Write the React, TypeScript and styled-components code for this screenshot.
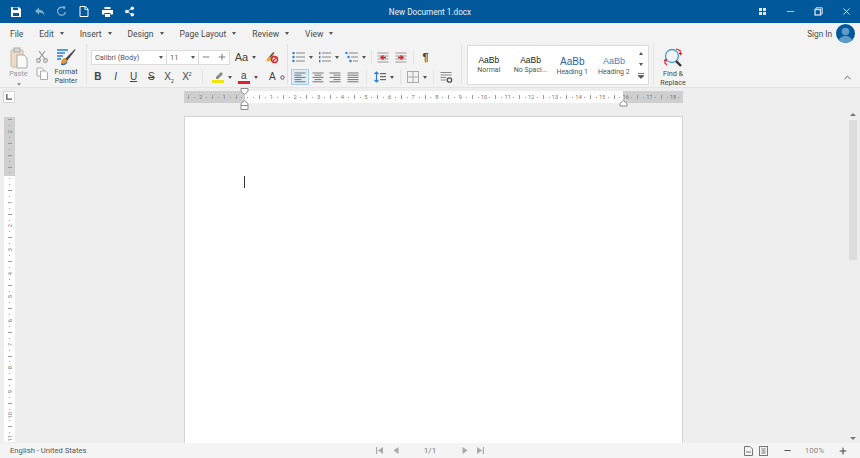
import * as React from 'react'
import styled, { createGlobalStyle } from 'styled-components'
import { Minus, Plus, X, ChevronUp, Share2 } from 'lucide-react'

const GlobalStyle = createGlobalStyle`
  html, body { margin: 0; padding: 0; }
  body { font-family: Roboto, "Noto Sans", sans-serif; color: #4a4a4a; }
`

const Shell = styled.div`
  width: 860px;
  height: 458px;
  display: flex;
  flex-direction: column;
  overflow: hidden;
  background: #eeeeee;
`

const TitleBar = styled.div`
  height: 23px;
  flex: none;
  background: #01589b;
  display: grid;
  grid-template-columns: 1fr auto 1fr;
  align-items: center;
  color: #fff;
`

const TitleGroup = styled.div<{ $end?: boolean }>`
  display: flex;
  align-items: center;
  justify-content: ${p => (p.$end ? 'flex-end' : 'flex-start')};
  padding-left: ${p => (p.$end ? 0 : 5)}px;
`

const TitleButton = styled.div<{ $w?: number; $dim?: boolean }>`
  width: ${p => p.$w ?? 22.7}px;
  height: 23px;
  display: flex;
  align-items: center;
  justify-content: center;
  opacity: ${p => (p.$dim ? 0.5 : 1)};
`

const DocTitle = styled.div`
  font-size: 8.2px;
  color: #eaf2f8;
`

const MenuBar = styled.div`
  height: 21px;
  flex: none;
  background: #f3f3f3;
  display: flex;
  align-items: center;
  padding: 0 5px 0 10px;
  font-size: 8.5px;
  color: #4a4a4a;
`

const MenuItem = styled.div`
  display: flex;
  align-items: center;
  gap: 6px;
  margin-right: 16px;
`

const Caret = styled.span<{ $flip?: boolean; $dim?: boolean; $top?: number }>`
  display: inline-block;
  width: 0;
  height: 0;
  border-left: 2.5px solid transparent;
  border-right: 2.5px solid transparent;
  border-top: 3px solid ${p => (p.$dim ? '#999' : '#555')};
  margin-top: ${p => p.$top ?? 0}px;
  transform: ${p => (p.$flip ? 'rotate(180deg)' : 'none')};
  flex: none;
`

const SignIn = styled.div`
  margin-left: auto;
  display: flex;
  align-items: center;
  gap: 4px;
  font-size: 8.2px;
`

const Avatar = styled.div`
  width: 19px;
  height: 19px;
  border-radius: 50%;
  background: #01589b;
  overflow: hidden;
  display: flex;
  justify-content: center;
`

const Ribbon = styled.div`
  height: 44px;
  flex: none;
  background: #f3f3f3;
  border-bottom: 1px solid #e4e4e4;
  display: flex;
  position: relative;
  box-sizing: border-box;
`

const Group = styled.div<{ $w: number; $pad?: number }>`
  width: ${p => p.$w}px;
  flex: none;
  display: flex;
  box-sizing: border-box;
  padding-left: ${p => p.$pad ?? 0}px;
  border-right: 1px solid #e2e2e2;
  margin-bottom: 3px;
`

const TallTool = styled.div<{ $w: number; $dim?: boolean }>`
  width: ${p => p.$w}px;
  flex: none;
  display: flex;
  flex-direction: column;
  align-items: center;
  padding-top: 3px;
  font-size: 7.2px;
  line-height: 8.5px;
  text-align: center;
  color: ${p => (p.$dim ? '#9a9a9a' : '#4a4a4a')};
`

const TallIcon = styled.div`
  height: 22px;
  margin-bottom: 1px;
  display: flex;
  align-items: center;
`

const SmallStack = styled.div`
  width: 18px;
  flex: none;
  display: flex;
  flex-direction: column;
  align-items: center;
  justify-content: space-between;
  padding: 6px 0 4px;
  box-sizing: border-box;
`

const Rows = styled.div<{ $left: number }>`
  display: flex;
  flex-direction: column;
  padding: 5px 0 0 ${p => p.$left}px;
  gap: 4px;
`

const Row = styled.div<{ $shift?: number }>`
  display: flex;
  align-items: center;
  height: 16px;
  margin-left: ${p => p.$shift ?? 0}px;
`

const Tool = styled.div<{ $w?: number; $active?: boolean; $ml?: number }>`
  width: ${p => p.$w ?? 17.8}px;
  height: 16px;
  margin-left: ${p => p.$ml ?? 0}px;
  box-sizing: border-box;
  flex: none;
  display: flex;
  align-items: center;
  justify-content: center;
  gap: 4px;
  font-family: "Liberation Sans", sans-serif;
  color: #444;
  background: ${p => (p.$active ? '#dcebf6' : 'transparent')};
  border: 1px solid ${p => (p.$active ? '#a9cfe9' : 'transparent')};
`

const Sep = styled.div<{ $m?: number }>`
  width: 1px;
  height: 14px;
  background: #e2e2e2;
  flex: none;
  margin: 0 ${p => p.$m ?? 4}px;
`

const FontBox = styled.div`
  width: 139px;
  height: 15px;
  flex: none;
  box-sizing: border-box;
  background: #fff;
  border: 1px solid #dcdcdc;
  display: flex;
  font-size: 7.4px;
  color: #555;
`

const FontField = styled.div<{ $w: number }>`
  width: ${p => p.$w}px;
  flex: none;
  box-sizing: border-box;
  display: flex;
  align-items: center;
  justify-content: space-between;
  padding: 0 3px;
  border-right: 1px solid #dcdcdc;
  &:last-child { border-right: 0; padding: 0 2px; }
`

const Letter = styled.span<{ $weight?: number; $italic?: boolean; $deco?: string; $size?: number }>`
  font-size: ${p => p.$size ?? 10}px;
  font-weight: ${p => p.$weight ?? 400};
  font-style: ${p => (p.$italic ? 'italic' : 'normal')};
  text-decoration: ${p => p.$deco ?? 'none'};
  line-height: 1;
  color: #444;
  sub, sup { font-size: 5px; line-height: 0; }
`

const Swatch = styled.div`
  display: flex;
  flex-direction: column;
  align-items: center;
  line-height: 1;
`

const SwatchBar = styled.div<{ $color: string }>`
  width: 12px;
  height: 3px;
  background: ${p => p.$color};
`

const Gallery = styled.div`
  width: 182px;
  height: 40px;
  margin: 1px 0 0 5px;
  flex: none;
  box-sizing: border-box;
  background: #fff;
  border: 1px solid #dcdcdc;
  display: flex;
`

const StyleCard = styled.div`
  width: 41.7px;
  flex: none;
  display: flex;
  flex-direction: column;
  align-items: center;
  padding-top: 9px;
  box-sizing: border-box;
  font-size: 7px;
  color: #555;
  line-height: 9px;
  white-space: nowrap;
`

const StylePreview = styled.div<{ $blue?: string; $size?: number }>`
  font-family: "Liberation Sans", "Noto Sans", sans-serif;
  font-size: ${p => p.$size ?? 8.5}px;
  color: ${p => p.$blue ?? '#222'};
  line-height: ${p => (p.$size ? 13 : 11)}px;
`

const GalleryArrows = styled.div`
  margin-left: auto;
  width: 14px;
  display: flex;
  flex-direction: column;
  align-items: center;
  justify-content: space-between;
  padding: 6px 0 5px;
`

const CollapseButton = styled.div`
  position: absolute;
  right: 7px;
  bottom: 4px;
  color: #555;
  display: flex;
`

const Workspace = styled.div`
  flex: 1;
  min-height: 0;
  display: grid;
  grid-template-columns: 184px 499px 1fr;
  grid-template-rows: 28px 1fr;
  background: #eeeeee;
`

const Corner = styled.div`
  width: 12px;
  height: 12px;
  margin: 3px 0 0 3px;
  background: #d6d6d6;
  padding: 1px;
  box-sizing: border-box;
`

const CornerInner = styled.div`
  width: 10px;
  height: 10px;
  background: #fff;
  display: flex;
  align-items: center;
  justify-content: center;
`

const HRuler = styled.div`
  position: relative;
  height: 12px;
  margin-top: 3px;
  display: flex;
  padding-left: 1.8px;
  background: #cfcfcf;
`

const HCell = styled.div<{ $white: boolean }>`
  width: 5.92px;
  height: 12px;
  flex: none;
  background: ${p => (p.$white ? '#fff' : '#cfcfcf')};
  display: flex;
  align-items: center;
  justify-content: center;
  font-size: 5.8px;
  color: #777;
  white-space: nowrap;
`

const HTick = styled.div<{ $long?: boolean }>`
  width: 1px;
  height: ${p => (p.$long ? 4 : 1)}px;
  background: #999;
  flex: none;
`

const VTick = styled.div<{ $long?: boolean }>`
  height: 1px;
  width: ${p => (p.$long ? 4 : 1)}px;
  background: #999;
  flex: none;
`

const Marker = styled.svg<{ $x: number; $y: number }>`
  position: absolute;
  left: ${p => p.$x}px;
  top: ${p => p.$y}px;
`

const VCol = styled.div`
  padding: 0.8px 0 0 4px;
  overflow: hidden;
`

const VRuler = styled.div`
  width: 11px;
  display: flex;
  flex-direction: column;
`

const VCell = styled.div<{ $white: boolean }>`
  height: 5.92px;
  flex: none;
  background: ${p => (p.$white ? '#fff' : '#cfcfcf')};
  display: flex;
  align-items: center;
  justify-content: center;
  font-size: 5.8px;
  color: #777;
  white-space: nowrap;
`

const VNumber = styled.span`
  writing-mode: vertical-rl;
  transform: rotate(180deg);
`

const Page = styled.div`
  background: #fff;
  border: 1px solid #d4d4d4;
  border-bottom: 0;
  box-sizing: border-box;
  padding: 59px 0 0 59px;
`

const TextCursor = styled.div`
  width: 1px;
  height: 12px;
  background: #333;
`

const ScrollCol = styled.div`
  display: flex;
  justify-content: flex-end;
  padding-right: 3px;
`

const ScrollBar = styled.div`
  width: 8px;
  display: flex;
  flex-direction: column;
  align-items: center;
  margin-top: -3px;
`

const ScrollUp = styled.div`
  width: 0;
  height: 0;
  border-left: 3.5px solid transparent;
  border-right: 3.5px solid transparent;
  border-bottom: 3px solid #777;
  margin: 0 0 4px;
`

const ScrollDown = styled(ScrollUp)`
  border-bottom: 0;
  border-top: 3px solid #777;
  margin: auto 0 3px;
`

const ScrollThumb = styled.div`
  width: 8px;
  height: 140px;
  background: #dcdcdc;
`

const StatusBar = styled.div`
  height: 15px;
  flex: none;
  background: #f4f4f4;
  display: grid;
  grid-template-columns: 1fr auto 1fr;
  align-items: center;
  font-size: 8px;
  color: #555;
`

const Language = styled.div`
  padding-left: 10px;
  font-size: 7.7px;
`

const Pager = styled.div`
  display: flex;
  align-items: center;
  color: #aaa;
`

const PagerButton = styled.div`
  width: 16px;
  display: flex;
  justify-content: center;
`

const PageCount = styled.div`
  width: 53px;
  text-align: center;
  color: #777;
`

const ZoomBar = styled.div`
  display: flex;
  align-items: center;
  justify-content: flex-end;
  padding-right: 12.5px;
`

const ZoomValue = styled.div`
  width: 46px;
  text-align: center;
  color: #888;
`

const ZoomBtn = styled.div<{ $gap?: number }>`
  display: flex;
  margin-right: ${p => p.$gap ?? 0}px;
  color: #444;
`

const Blue = '#2b7cd3'

function Lines ({ kind }: { kind: 'left' | 'center' | 'right' | 'justify' }) {
  const rows = [0, 1, 2, 3, 4]
  return (
    <svg width='12' height='11' viewBox='0 0 12 11'>
      {rows.map(r => {
        const short = r % 2 === 1 && kind !== 'justify'
        const w = short ? 7 : 11
        const x = kind === 'left' || kind === 'justify' ? 0.5 : kind === 'right' ? 11.5 - w : 6 - w / 2
        return <rect key={r} x={x} y={0.5 + r * 2.2} width={w} height='1' fill='#777' />
      })}
    </svg>
  )
}

function ListIcon ({ kind }: { kind: 'bullet' | 'number' | 'multi' }) {
  return (
    <svg width='13' height='11' viewBox='0 0 13 11'>
      {[1, 5, 9].map((y, i) => {
        const ox = kind === 'multi' ? i * 2 : 0
        return (
          <g key={y}>
            {kind === 'number'
              ? <rect x={1} y={y - 1} width='1.4' height='2.4' fill={Blue} />
              : <circle cx={1.5 + ox} cy={y} r='1.2' fill={Blue} />}
            <rect x={4 + ox} y={y - 0.5} width={9 - ox} height='1' fill='#888' />
          </g>
        )
      })}
    </svg>
  )
}

function IndentIcon ({ flip }: { flip?: boolean }) {
  return (
    <svg width='12' height='11' viewBox='0 0 12 11'>
      {[0.5, 3.5, 6.5, 9.5].map(y => <rect key={y} x='0.5' y={y} width='11' height='1' fill='#999' />)}
      <path d={flip ? 'M3 5.5h4M5.5 3.5l2.5 2-2.5 2' : 'M9 5.5H5M6.5 3.5L4 5.5l2.5 2'} stroke='#e0202f' strokeWidth='1.4' fill='none' />
    </svg>
  )
}

function ClearFormat () {
  return (
    <svg width='14' height='13' viewBox='0 0 14 13'>
      <path d='M8 1L3 6.5 1 10h4l4-4' fill='#e9a33a' />
      <path d='M9 1.5L5 6' stroke='#555' strokeWidth='1.2' />
      <circle cx='9.5' cy='8.5' r='3' fill='none' stroke='#d9252e' strokeWidth='1.4' />
      <path d='M7.5 10.5l4-4' stroke='#d9252e' strokeWidth='1.2' />
    </svg>
  )
}

function ParaStyleIcon () {
  return (
    <svg width='13' height='12' viewBox='0 0 13 12'>
      {[1, 3.5, 6, 8.5].map(y => <rect key={y} x='0.5' y={y} width={y > 5 ? 6 : 11} height='1' fill='#888' />)}
      <circle cx='9.5' cy='9' r='2.2' fill='none' stroke='#555' strokeWidth='1.3' />
    </svg>
  )
}

function Ruler () {
  const cells = []
  for (let i = -10; i < 74; i++) {
    const abs = Math.abs(i)
    let content: React.ReactNode = <HTick />
    if (i !== 0 && abs % 4 === 0) content = abs / 4
    else if (abs % 4 === 2) content = <HTick $long />
    cells.push(<HCell key={i} $white={i >= 0 && i < 64}>{content}</HCell>)
  }
  return (
    <HRuler>
      {cells}
      <Marker $x={56} $y={-3} width='9' height='7' viewBox='0 0 9 7'>
        <path d='M1 .5h7v3L4.500 6.500 1 3.500z' fill='#fff' stroke='#8a8a8a' />
      </Marker>
      <Marker $x={56} $y={9} width='9' height='10' viewBox='0 0 9 10'>
        <path d='M1 9.500v-6L4.500 .5 8 3.500v6zM1 5.500h7' fill='#fff' stroke='#8a8a8a' />
      </Marker>
      <Marker $x={435} $y={9} width='9' height='7' viewBox='0 0 9 7'>
        <path d='M1 6v-2.500L4.500 .5 8 3.500V6z' fill='#fff' stroke='#8a8a8a' />
      </Marker>
    </HRuler>
  )
}

function SideRuler () {
  const cells = []
  for (let i = -10; i < 45; i++) {
    const abs = Math.abs(i)
    let content: React.ReactNode = <VTick />
    if (i !== 0 && abs % 4 === 0) content = <VNumber>{abs / 4}</VNumber>
    else if (abs % 4 === 2) content = <VTick $long />
    cells.push(<VCell key={i} $white={i >= 0}>{content}</VCell>)
  }
  return <VRuler>{cells}</VRuler>
}

export default function App () {
  return (
    <Shell>
      <GlobalStyle />
      <TitleBar>
        <TitleGroup>
          <TitleButton>
            <svg width='10' height='10' viewBox='0 0 10 10'><path d='M0 0h8l2 2v8H0z' fill='#fff' /><rect x='2' y='0.500' width='5' height='2.500' fill='#01589b' /><rect x='2' y='6' width='6' height='3' fill='#01589b' /></svg>
          </TitleButton>
          <TitleButton $dim>
            <svg width='11' height='10' viewBox='0 0 11 10'><path d='M1 4l4-3.500v2.200c3.500 0 5.500 2.300 5.500 6.300C9.500 6.500 8 5.500 5 5.500v2.200z' fill='#fff' /></svg>
          </TitleButton>
          <TitleButton $dim>
            <svg width='11' height='11' viewBox='0 0 11 11'><path d='M8.500 2.500A4 4 0 1 0 9.500 6' stroke='#fff' strokeWidth='1.300' fill='none' /><path d='M6.500 0l3 .5L9 3.500z' fill='#fff' /></svg>
          </TitleButton>
          <TitleButton>
            <svg width='10' height='11' viewBox='0 0 10 11'><path d='M1 .5h5.500L9 3v7.500H1zM6 .5V3.500h3' stroke='#fff' fill='none' /></svg>
          </TitleButton>
          <TitleButton>
            <svg width='11' height='10' viewBox='0 0 11 10'><rect x='2.500' y='0' width='6' height='2' fill='#fff' /><path d='M0 3h11v4.500H8.500V6h-6v1.500H0z' fill='#fff' /><rect x='3' y='7' width='5' height='3' fill='#fff' /></svg>
          </TitleButton>
          <TitleButton>
            <Share2 size={11} color='#fff' fill='#fff' strokeWidth={1.6} />
          </TitleButton>
        </TitleGroup>
        <DocTitle>New Document 1.docx</DocTitle>
        <TitleGroup $end>
          <TitleButton $w={27}>
            <svg width='7' height='7' viewBox='0 0 7 7' fill='#dfe9f1'><rect width='3' height='3' /><rect x='4' width='3' height='3' /><rect y='4' width='3' height='3' /><rect x='4' y='4' width='3' height='3' /></svg>
          </TitleButton>
          <TitleButton $w={28}>
            <Minus size={11} color='#c4d7e6' />
          </TitleButton>
          <TitleButton $w={28}>
            <svg width='9' height='9' viewBox='0 0 9 9'><path d='M2 2V.8h6.200V7H7' stroke='#d5e3ee' fill='none' /><rect x='1' y='2.500' width='5.500' height='5.500' stroke='#d5e3ee' strokeWidth='1.300' fill='none' /></svg>
          </TitleButton>
          <TitleButton $w={28}>
            <X size={11} color='#e3edf5' />
          </TitleButton>
        </TitleGroup>
      </TitleBar>

      <MenuBar>
        <MenuItem>File</MenuItem>
        {['Edit', 'Insert', 'Design', 'Page Layout', 'Review', 'View'].map(label => (
          <MenuItem key={label}>{label}<Caret /></MenuItem>
        ))}
        <SignIn>
          Sign In
          <Avatar>
            <svg width='19' height='19' viewBox='0 0 19 19'><circle cx='9.500' cy='7.500' r='3.800' fill='#5f9bc9' /><path d='M2.500 19c0-5 3-7 7-7s7 2 7 7z' fill='#5f9bc9' /></svg>
          </Avatar>
        </SignIn>
      </MenuBar>

      <Ribbon>
        <Group $w={87} $pad={4}>
          <TallTool $w={29} $dim>
            <TallIcon>
              <svg width='18' height='22' viewBox='0 0 18 22'><rect x='1' y='3' width='12' height='17' rx='1' fill='#ecdcc8' stroke='#c9b79f' /><rect x='4' y='1' width='6' height='4' fill='#d8d8d8' stroke='#aaa' /><path d='M7 8h7l3 3v10H7z' fill='#fafafa' stroke='#aaa' /></svg>
            </TallIcon>
            Paste
            <Caret $dim $top={4} />
          </TallTool>
          <SmallStack>
            <svg width='12' height='13' viewBox='0 0 12 13' fill='none' stroke='#999' strokeWidth='1.200'><path d='M3 1l6 8M9 1L3 9' /><circle cx='2.500' cy='10.500' r='1.800' /><circle cx='9.500' cy='10.500' r='1.800' /></svg>
            <svg width='12' height='13' viewBox='0 0 12 13' fill='#fff' stroke='#aaa'><path d='M1 1h5l2 2v6H1z' /><path d='M4.500 4h5l2 2v6.500h-7z' /></svg>
          </SmallStack>
          <TallTool $w={30}>
            <TallIcon>
              <svg width='20' height='20' viewBox='0 0 20 20'>
                <path d='M1 3h11M1 6h8M1 9h6M1 12h4' stroke={Blue} strokeWidth='1.400' />
                <path d='M19 2L9 12l2 2L19.500 3z' fill='#444' />
                <path d='M9 11c-2 0-4 2-4 5 2 1 5 1 6-2z' fill='#e8962e' />
                <path d='M5 16c1.500 1 4.500 1 6-2l.5 1c-1 3-4 3.500-6.500 3z' fill='#2b6cb0' />
              </svg>
            </TallIcon>
            Format<br />Painter
          </TallTool>
        </Group>

        <Group $w={201}>
          <Rows $left={4}>
            <Row>
              <FontBox>
                <FontField $w={75}>Calibri (Body)<Caret /></FontField>
                <FontField $w={32}>11<Caret /></FontField>
                <FontField $w={30}><Minus size={10} color='#666' /><Plus size={10} color='#666' /></FontField>
              </FontBox>
              <Tool $w={31}><Letter $size={11}>Aa</Letter><Caret /></Tool>
              <Tool $w={18} $ml={2}><ClearFormat /></Tool>
            </Row>
            <Row $shift={-2}>
              <Tool><Letter $weight={700}>B</Letter></Tool>
              <Tool><Letter $italic>I</Letter></Tool>
              <Tool><Letter $deco='underline'>U</Letter></Tool>
              <Tool><Letter $deco='line-through'>S</Letter></Tool>
              <Tool><Letter>X<sub>2</sub></Letter></Tool>
              <Tool><Letter>X<sup>2</sup></Letter></Tool>
              <Sep $m={6} />
              <Tool $w={26}>
                <Swatch>
                  <svg width='10' height='8' viewBox='0 0 10 8'><path d='M8 0l2 2-5 5H3V5z' fill='#888' /></svg>
                  <SwatchBar $color='#f0e60e' />
                </Swatch>
                <Caret />
              </Tool>
              <Tool $w={26}>
                <Swatch>
                  <Letter $size={10}>a</Letter>
                  <SwatchBar $color='#e0202f' />
                </Swatch>
                <Caret />
              </Tool>
              <Tool $w={18} $ml={7}>
                <Letter $size={10}>A</Letter>
                <svg width='5' height='5' viewBox='0 0 5 5'><circle cx='2.500' cy='2.500' r='1.700' fill='none' stroke='#555' /></svg>
              </Tool>
            </Row>
          </Rows>
        </Group>

        <Group $w={174}>
          <Rows $left={3}>
            <Row $shift={-2}>
              <Tool $w={26.500}><ListIcon kind='bullet' /><Caret /></Tool>
              <Tool $w={26.500}><ListIcon kind='number' /><Caret /></Tool>
              <Tool $w={26}><ListIcon kind='multi' /><Caret /></Tool>
              <Sep $m={2.500} />
              <Tool><IndentIcon /></Tool>
              <Tool><IndentIcon flip /></Tool>
              <Sep $m={3} />
              <Tool><Letter $weight={700} $size={11}>¶</Letter></Tool>
            </Row>
            <Row>
              <Tool $active><Lines kind='left' /></Tool>
              <Tool><Lines kind='center' /></Tool>
              <Tool><Lines kind='right' /></Tool>
              <Tool><Lines kind='justify' /></Tool>
              <Sep $m={3.500} />
              <Tool $w={27}>
                <svg width='12' height='12' viewBox='0 0 12 12'>
                  <path d='M2.500 1v10M.5 3l2-2 2 2M.5 9l2 2 2-2' stroke={Blue} strokeWidth='1.200' fill='none' />
                  {[2, 5, 8].map(y => <rect key={y} x='6' y={y} width='6' height='1.200' fill='#666' />)}
                </svg>
                <Caret />
              </Tool>
              <Sep $m={2.500} />
              <Tool $w={27}>
                <svg width='12' height='12' viewBox='0 0 12 12' fill='none' stroke='#aaa'><rect x='.5' y='.5' width='11' height='11' /><path d='M6 0v12M0 6h12' /></svg>
                <Caret />
              </Tool>
              <Sep $m={3} />
              <Tool><ParaStyleIcon /></Tool>
            </Row>
          </Rows>
        </Group>

        <Gallery>
          <StyleCard><StylePreview>AaBb</StylePreview>Normal</StyleCard>
          <StyleCard><StylePreview>AaBb</StylePreview>No Spaci...</StyleCard>
          <StyleCard><StylePreview $blue='#2f5f9e' $size={10}>AaBb</StylePreview>Heading 1</StyleCard>
          <StyleCard><StylePreview $blue='#4f81bd' $size={9}>AaBb</StylePreview>Heading 2</StyleCard>
          <GalleryArrows>
            <Caret $flip />
            <Caret />
            <svg width='6' height='6' viewBox='0 0 6 6'><path d='M0 .5h6M0 2.500h6L3 5.500z' stroke='#555' strokeWidth='.8' fill='#555' /></svg>
          </GalleryArrows>
        </Gallery>

        <Group $w={5} />
        <TallTool $w={38}>
          <TallIcon>
            <svg width='21' height='22' viewBox='0 0 21 22'>
              <circle cx='9' cy='9' r='6.500' fill='none' stroke='#4a9bd8' strokeWidth='1.300' />
              <path d='M13 14l5 5' stroke='#333' strokeWidth='2.400' />
              <path d='M13 2l4 1.500.5 3.500M4 18l-2-2V13' stroke='#d9252e' strokeWidth='1.200' fill='none' />
              <path d='M15.500 6h4l-2 2.500zM.5 14h4l-2-2.500z' fill='#d9252e' />
            </svg>
          </TallIcon>
          Find &amp;<br />Replace
        </TallTool>
        <CollapseButton><ChevronUp size={11} /></CollapseButton>
      </Ribbon>

      <Workspace>
        <Corner>
          <CornerInner>
            <svg width='6' height='6' viewBox='0 0 6 6'><path d='M.8 0v5.200H6' stroke='#555' strokeWidth='1.300' fill='none' /></svg>
          </CornerInner>
        </Corner>
        <Ruler />
        <div />
        <VCol><SideRuler /></VCol>
        <Page><TextCursor /></Page>
        <ScrollCol>
          <ScrollBar>
            <ScrollUp />
            <ScrollThumb />
            <ScrollDown />
          </ScrollBar>
        </ScrollCol>
      </Workspace>

      <StatusBar>
        <Language>English - United States</Language>
        <Pager>
          <PagerButton><svg width='7' height='7' viewBox='0 0 7 7' fill='#aaa'><rect width='1.200' height='7' /><path d='M7 0v7L2 3.500z' /></svg></PagerButton>
          <PagerButton><svg width='6' height='7' viewBox='0 0 6 7' fill='#aaa'><path d='M5.500 0v7L.5 3.500z' /></svg></PagerButton>
          <PageCount>1/1</PageCount>
          <PagerButton><svg width='6' height='7' viewBox='0 0 6 7' fill='#aaa'><path d='M.5 0v7l5-3.500z' /></svg></PagerButton>
          <PagerButton><svg width='7' height='7' viewBox='0 0 7 7' fill='#aaa'><rect x='5.800' width='1.200' height='7' /><path d='M0 0v7l5-3.500z' /></svg></PagerButton>
        </Pager>
        <ZoomBar>
          <ZoomBtn $gap={6}><svg width='9' height='10' viewBox='0 0 9 10' fill='none' stroke='#777'><path d='M.5.5h5.500l2.500 2.500v6.500H.5zM2 6h5' /></svg></ZoomBtn>
          <ZoomBtn $gap={15}><svg width='9' height='10' viewBox='0 0 9 10' fill='none' stroke='#777'><rect x='.5' y='.5' width='8' height='9' /><path d='M2.500 3h4M2.500 5h4M2.500 7h4' /></svg></ZoomBtn>
          <ZoomBtn><Minus size={9} strokeWidth={2.5} /></ZoomBtn>
          <ZoomValue>100%</ZoomValue>
          <ZoomBtn><Plus size={10} strokeWidth={2.5} /></ZoomBtn>
        </ZoomBar>
      </StatusBar>
    </Shell>
  )
}
